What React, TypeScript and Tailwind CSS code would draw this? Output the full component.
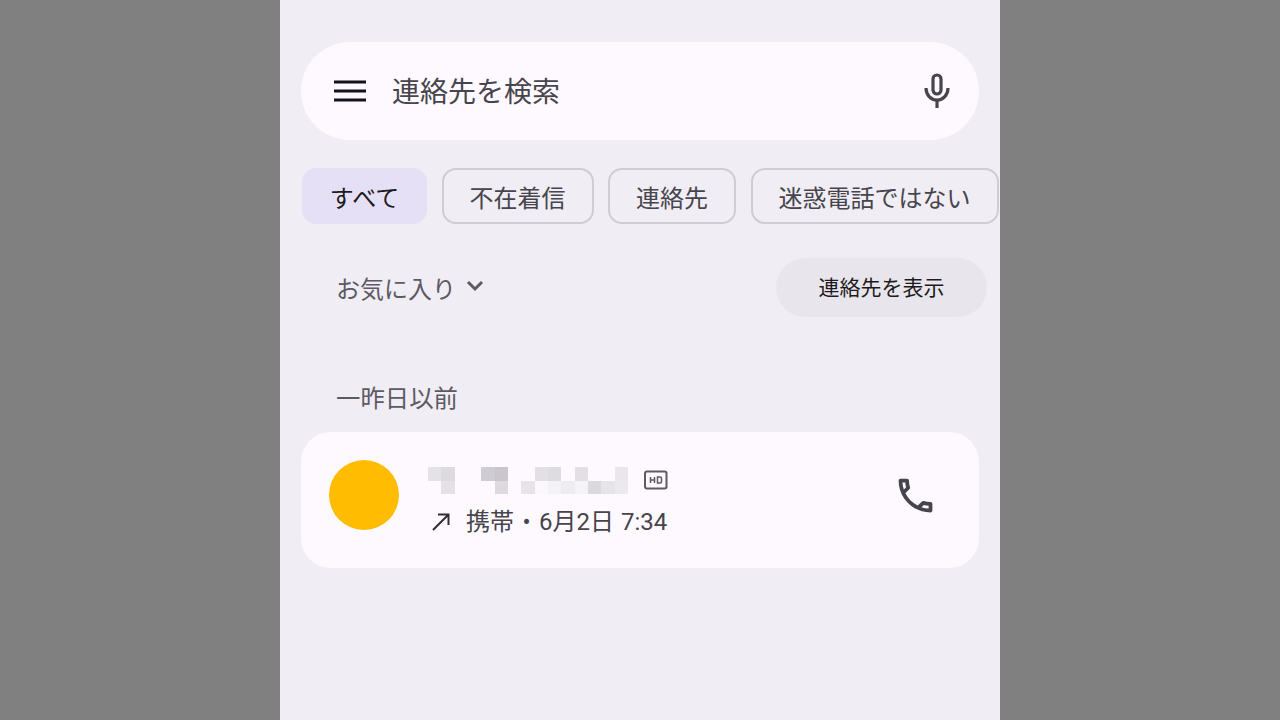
const font = { fontFamily: '"Roboto", "Noto Sans CJK JP", sans-serif' };

function Chip({ label, width, active }: { label: string; width: string; active?: boolean }) {
  return (
    <div
      className={`${width} h-[56px] shrink-0 rounded-[14px] flex items-center justify-center pt-[5px] text-[24px] leading-none ${
        active ? "bg-[#e6e0f7] text-[#1d1b20]" : "border-2 border-[#d0ccd4] text-[#46444c]"
      }`}
    >
      {label}
    </div>
  );
}

const mosaic: [number, number, string][] = [
  [0, 0, "#e4e1e7"], [1, 0, "#dcd9df"], [4, 0, "#cfccd3"], [5, 0, "#c9c6cd"],
  [8, 0, "#e2dfe5"], [9, 0, "#dedbe1"], [11, 0, "#e2dfe5"], [14, 0, "#e9e6ec"],
  [1, 1, "#e4e1e7"], [5, 1, "#dcd9df"], [7, 1, "#e6e3e9"], [8, 1, "#fbf7fc"],
  [9, 1, "#f5f2f7"], [10, 1, "#efecf1"], [11, 1, "#f6f3f8"], [12, 1, "#dbd8de"], [13, 1, "#e6e3e9"],
  [14, 1, "#ece9ee"],
];

export default function App() {
  return (
    <div className="w-full h-screen bg-[#808080] flex justify-center overflow-hidden" style={font}>
      <div className="w-[720px] h-full bg-[#f0edf4] flex flex-col">
        <div className="mx-[21px] mt-[42px] h-[98px] rounded-[49px] bg-[#fef9fe] flex items-center pl-[33px] pr-[28px] shrink-0">
          <svg width="32" height="22" viewBox="0 0 32 22" className="shrink-0">
            <path d="M0 2h32M0 11h32M0 20h32" stroke="#14121a" strokeWidth="3.200" />
          </svg>
          <span className="ml-[26px] pt-[4px] text-[28px] leading-none text-[#46444c] flex-1">連絡先を検索</span>
          <svg width="28" height="36" viewBox="0 0 28 36" fill="none" className="shrink-0">
            <rect x="10" y="2" width="8" height="19" rx="4" stroke="#46444c" strokeWidth="3.200" />
            <path d="M3 15c0 7 4.800 12 11 12s11-5 11-12" stroke="#46444c" strokeWidth="3.200" />
            <path d="M14 27v8" stroke="#46444c" strokeWidth="3.200" />
          </svg>
        </div>

        <div className="ml-[22px] mt-[28px] flex gap-[14.500px] shrink-0">
          <Chip label="すべて" width="w-[125px]" active />
          <Chip label="不在着信" width="w-[152px]" />
          <Chip label="連絡先" width="w-[128px]" />
          <Chip label="迷惑電話ではない" width="w-[248px]" />
        </div>

        <div className="mt-[34px] ml-[56px] mr-[13px] h-[59px] flex items-center justify-between shrink-0">
          <div className="flex items-center text-[24px] leading-none text-[#5d5a64]">
            <span className="pt-[5px]">お気に入り</span>
            <svg width="18" height="12" viewBox="0 0 18 12" fill="none" className="ml-[10px] -mt-[4px]">
              <path d="M2 2l7 7 7-7" stroke="#5d5a64" strokeWidth="3" />
            </svg>
          </div>
          <div className="w-[211px] h-[59px] rounded-[30px] bg-[#e8e6ec] flex items-center justify-center pt-[2px] text-[21px] leading-none text-[#1d1b20]">
            連絡先を表示
          </div>
        </div>

        <div className="ml-[56px] mt-[64px] text-[24.400px] leading-[36px] text-[#5d5a64] shrink-0">一昨日以前</div>

        <div className="mx-[21px] mt-[15px] h-[136px] rounded-[30px] bg-[#fef9fe] flex items-center pl-[28px] pr-[41px] shrink-0">
          <div className="w-[70px] h-[70px] rounded-full bg-[#ffbc00] shrink-0 -mt-[10px]" />
          <div className="ml-[29px] flex flex-col flex-1">
            <div className="flex items-center h-[27px]">
              <svg width="200" height="27" viewBox="0 0 15 2" preserveAspectRatio="none" shapeRendering="crispEdges" className="shrink-0">
                {mosaic.map(([x, y, c]) => (
                  <rect key={`${x}-${y}`} x={x} y={y} width="1" height="1" fill={c} />
                ))}
              </svg>
              <svg width="24" height="20" viewBox="0 0 24 20" fill="none" className="ml-[16px] -mt-[1px]">
                <rect x="1" y="1.500" width="21.500" height="17" rx="2" stroke="#5d5a64" strokeWidth="2" />
                <path d="M6.500 7v6M10.500 7v6M6.500 10h4" stroke="#5d5a64" strokeWidth="1.500" />
                <path d="M13.500 7h2.500a1.500 1.500 0 0 1 1.500 1.500v3a1.500 1.500 0 0 1-1.500 1.500h-2.500z" stroke="#5d5a64" strokeWidth="1.500" />
              </svg>
            </div>
            <div className="flex items-center mt-[10px] h-[30px]">
              <svg width="20" height="20" viewBox="0 0 20 20" fill="none" className="ml-[3px] mt-[6px] shrink-0">
                <path d="M2 18L17 3M7 2.500h10.500V13" stroke="#302e36" strokeWidth="2" />
              </svg>
              <span className="ml-[15px] pt-[6px] text-[24px] leading-none text-[#46444c] whitespace-nowrap">
                携帯 <span className="mx-[2.500px]">•</span> 6月2日 <span className="ml-[1px]">7:34</span>
              </span>
            </div>
          </div>
          <svg width="45" height="45" viewBox="0 0 24 24" fill="#46444c" className="shrink-0 -mt-[10px]">
            <path d="M6.540 5c.060.890.210 1.760.450 2.590l-1.200 1.200c-.410-1.200-.670-2.470-.760-3.790h1.510m9.860 12.020c.850.240 1.720.390 2.600.450v1.490c-1.320-.090-2.590-.350-3.800-.750l1.200-1.190M7.500 3H4c-.550 0-1 .450-1 1 0 9.390 7.610 17 17 17 .550 0 1-.450 1-1v-3.490c0-.550-.450-1-1-1-1.240 0-2.450-.200-3.570-.570-.100-.040-.210-.050-.310-.050-.260 0-.510.100-.710.290l-2.200 2.200c-2.830-1.450-5.150-3.760-6.590-6.590l2.200-2.200c.280-.280.360-.670.250-1.020C8.700 6.450 8.500 5.250 8.500 4c0-.550-.450-1-1-1z" />
          </svg>
        </div>
      </div>
    </div>
  );
}
